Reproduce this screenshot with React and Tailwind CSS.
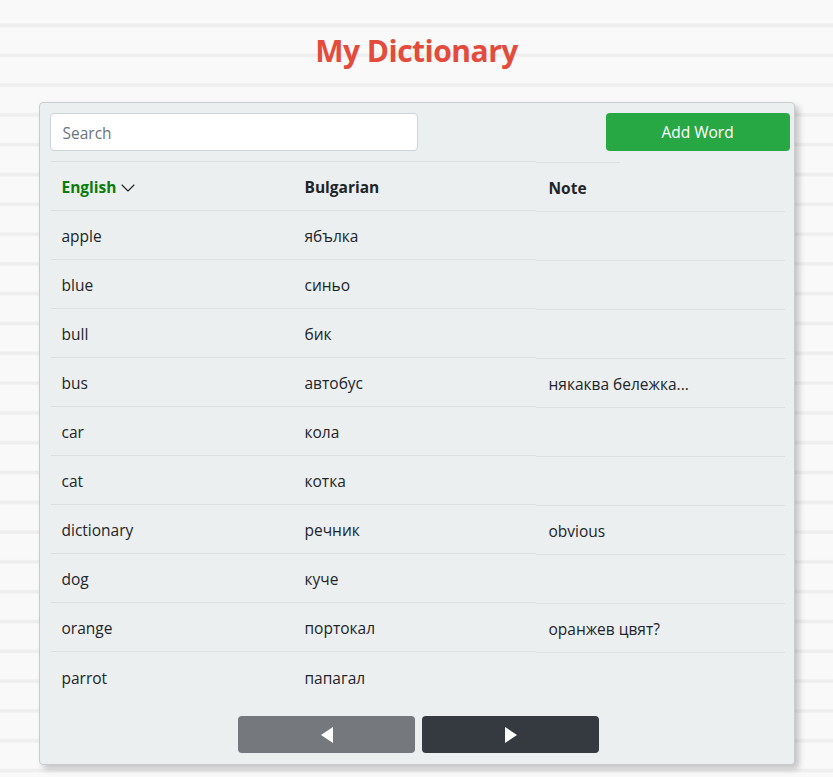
import React, { useState } from "react";
import { ChevronDown } from "lucide-react";

const words = [
  { en: "apple", bg: "ябълка", note: "" },
  { en: "blue", bg: "синьо", note: "" },
  { en: "bull", bg: "бик", note: "" },
  { en: "bus", bg: "автобус", note: "някаква бележка..." },
  { en: "car", bg: "кола", note: "" },
  { en: "cat", bg: "котка", note: "" },
  { en: "dictionary", bg: "речник", note: "obvious" },
  { en: "dog", bg: "куче", note: "" },
  { en: "orange", bg: "портокал", note: "оранжев цвят?" },
  { en: "parrot", bg: "папагал", note: "" },
];

function Row({ w, last }) {
  const line = last ? "" : "border-b border-[#dcdfe2]";
  return (
    <div className="flex h-[49px]">
      <div className={`w-[243px] pl-[11px] pt-[4px] flex items-center ${line}`}>{w.en}</div>
      <div className={`w-[242px] pl-[11px] pt-[4px] flex items-center ${line}`}>{w.bg}</div>
      <div className={`w-[249px] pl-[13px] pt-[3px] flex items-center ${last ? "" : "border-b border-[#dcdfe2] translate-y-px"}`}>
        {w.note}
      </div>
    </div>
  );
}

export default function App() {
  const [query, setQuery] = useState("");
  const list = words.filter((w) => w.en.includes(query.toLowerCase()));

  return (
    <div
      className="min-h-[777px] bg-[#f9f9f9] bg-[repeating-linear-gradient(to_bottom,#f9f9f9_0px,#f9f9f9_23px,#eeeeee_24.5px,#eeeeee_26.5px,#f9f9f9_28px,#f9f9f9_29.8px)] text-[15.5px] text-[#212529]"
      style={{ fontFamily: '"Open Sans", "Noto Sans", sans-serif' }}
    >
      <div className="flex flex-col items-center pt-[31px]">
        <h1 className="text-[30px] leading-[40px] font-bold text-[#e34c3c] tracking-[-0.5px]">My Dictionary</h1>

        <div className="mt-[31px] w-[756px] bg-[#eceff0] border border-[#c9cbcc] rounded-[4px] shadow-[4px_4px_6px_rgba(0,0,0,0.22)] px-[10px] pt-[10px] pb-[11px]">
          <div className="flex justify-between items-center mr-[-6px] mb-[10px]">
            <input
              value={query}
              onChange={(e) => setQuery(e.target.value)}
              placeholder="Search"
              className="w-[368px] h-[38px] px-[12px] pt-[2px] bg-white border border-[#ced4da] rounded-[4px] outline-none placeholder:text-[#6c757d] text-[#495057]"
            />
            <button className="w-[184px] h-[38px] pt-[2px] bg-[#28a745] text-white rounded-[4px]">Add Word</button>
          </div>

          <div className="ml-[1px] w-[734px]">
            <div className="flex h-[50px] font-bold">
              <div className="w-[243px] pl-[11px] pt-[3px] flex items-center border-y border-[#dcdfe2] text-[#0a7d0a]">
                English <ChevronDown className="w-[24px] h-[24px] text-[#222]" strokeWidth={1.1} />
              </div>
              <div className="w-[242px] pl-[11px] pt-[3px] flex items-center border-y border-[#dcdfe2]">Bulgarian</div>
              <div className="w-[249px] flex flex-col translate-y-px">
                <div className="w-[84px] border-t border-[#dcdfe2]" />
                <div className="flex-1 pl-[13px] pt-[3px] flex items-center border-b border-[#dcdfe2]">Note</div>
              </div>
            </div>
            {list.map((w, i) => (
              <Row key={w.en} w={w} last={i === list.length - 1} />
            ))}
          </div>

          <div className="flex justify-center gap-[7px] mt-[15px] mr-[-4px]">
            <button className="w-[177px] h-[37px] bg-[#75797d] rounded-[4px] flex items-center justify-center">
              <svg width="14" height="18" viewBox="0 0 14 18"><path d="M13 1 L1 9 L13 17 Z" fill="white" /></svg>
            </button>
            <button className="w-[177px] h-[37px] bg-[#343a40] rounded-[4px] flex items-center justify-center">
              <svg width="14" height="18" viewBox="0 0 14 18"><path d="M1 1 L13 9 L1 17 Z" fill="white" /></svg>
            </button>
          </div>
        </div>
      </div>
    </div>
  );
}
